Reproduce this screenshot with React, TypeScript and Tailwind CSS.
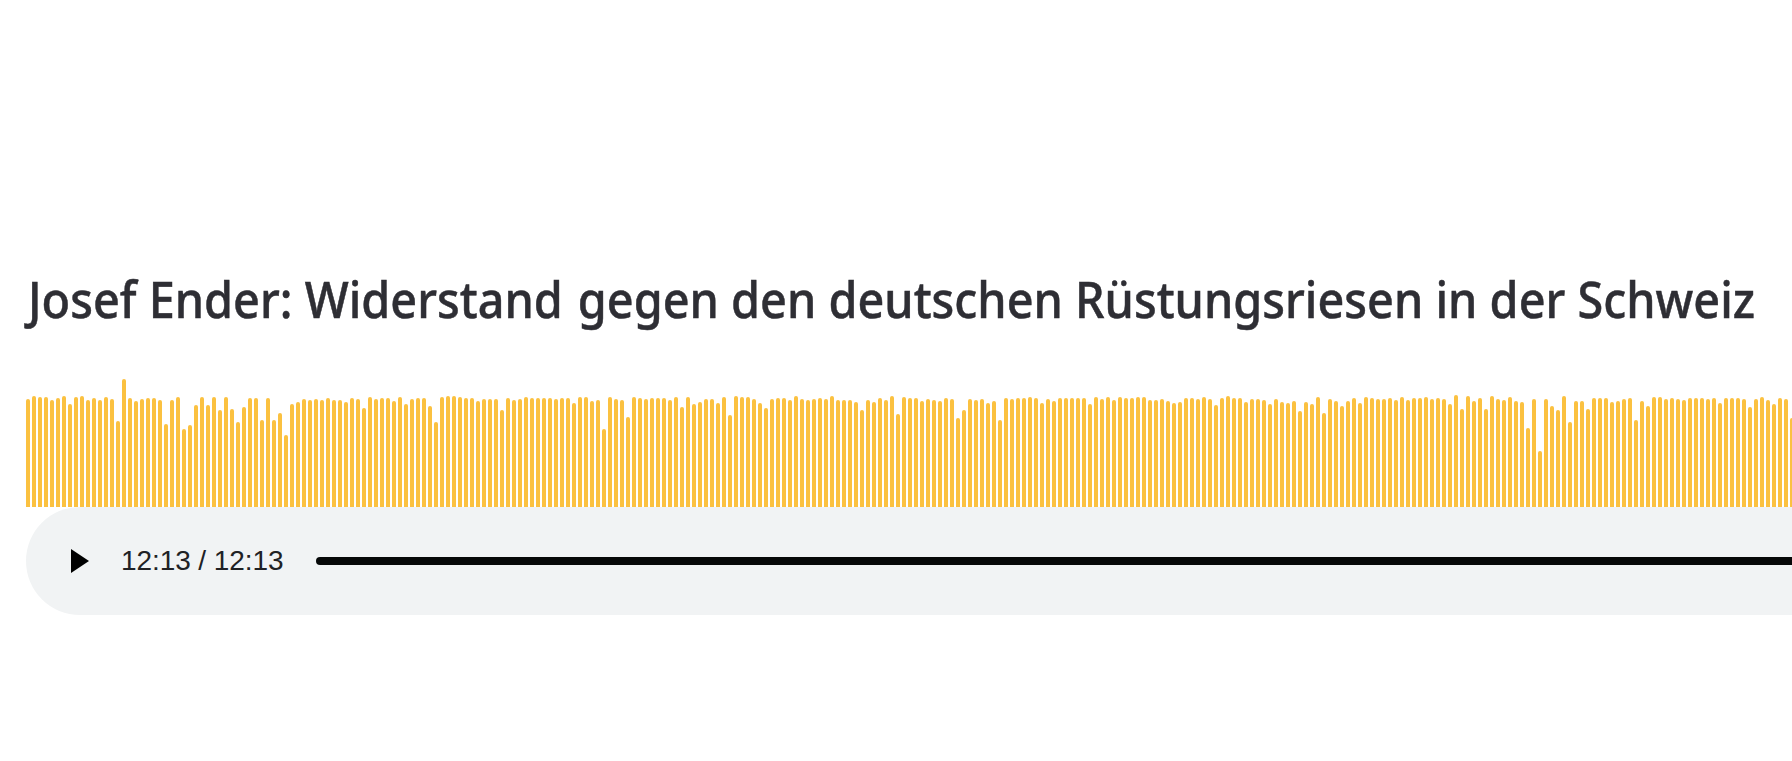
import React from "react";

// Peak heights in px, one entry per bar
const PEAKS = [
  108, 111, 110, 110, 107, 109, 111, 103, 110, 111, 107, 109, 107, 110, 108,
  86, 128, 109, 106, 108, 109, 109, 107, 83, 107, 110, 78, 82, 102, 110,
  102, 110, 97, 110, 98, 85, 100, 109, 109, 87, 109, 87, 94, 72, 103,
  105, 108, 107, 108, 107, 109, 107, 107, 105, 109, 108, 99, 110, 108, 109,
  109, 106, 110, 103, 108, 109, 109, 101, 85, 110, 111, 111, 110, 109, 109,
  106, 108, 108, 108, 97, 109, 107, 108, 110, 109, 109, 109, 109, 108, 109,
  109, 104, 110, 110, 106, 107, 78, 110, 108, 107, 90, 110, 109, 108, 109,
  109, 109, 107, 110, 100, 110, 103, 105, 108, 108, 104, 110, 92, 111, 110,
  110, 108, 104, 99, 108, 109, 109, 107, 111, 108, 107, 108, 109, 108, 111,
  107, 107, 107, 105, 97, 107, 105, 109, 107, 111, 93, 110, 109, 109, 106,
  108, 107, 106, 109, 108, 89, 97, 108, 107, 108, 104, 106, 87, 109, 108,
  109, 109, 110, 109, 104, 108, 106, 109, 109, 109, 109, 109, 103, 110, 108,
  110, 107, 110, 109, 109, 110, 110, 107, 107, 108, 106, 104, 105, 109, 109,
  108, 110, 108, 102, 109, 111, 109, 109, 105, 108, 108, 107, 103, 108, 105,
  104, 106, 96, 105, 103, 110, 94, 108, 106, 101, 106, 109, 104, 110, 109,
  108, 108, 109, 107, 110, 107, 109, 109, 110, 108, 109, 108, 103, 112, 98,
  111, 106, 109, 98, 111, 108, 107, 110, 106, 105, 79, 108, 56, 108, 101,
  97, 111, 85, 106, 106, 98, 109, 109, 109, 105, 106, 108, 109, 87, 106,
  101, 110, 110, 108, 109, 108, 107, 109, 109, 109, 108, 109, 104, 109, 109,
  109, 108, 100, 108, 110, 107, 103, 109, 108, 89,
];

const Waveform = () => (
  <div className="flex h-32 items-end gap-[2px]">
    {PEAKS.map((height, i) => (
      <div
        key={i}
        className="w-1 shrink-0 rounded-t-[2px] bg-[#fbc140]"
        style={{ height }}
      />
    ))}
  </div>
);

const AudioControls = () => (
  <div className="flex h-[108px] w-[1900px] items-center rounded-full bg-[#f1f3f4] pl-[45px]">
    <button type="button" aria-label="Play" className="shrink-0">
      <svg width="18" height="24" viewBox="0 0 18 24" className="block">
        <path d="M0 0L18 12L0 24Z" fill="#000" />
      </svg>
    </button>
    <span className="ml-8 w-[195px] shrink-0 font-['Liberation_Sans',sans-serif] text-[28px] leading-8 tracking-[-0.08px] whitespace-nowrap text-[#202124]">
      12:13 / 12:13
    </span>
    <div className="h-2 grow rounded-full bg-[#060808]" />
  </div>
);

const App = () => {
  return (
    <div className="h-[761px] w-full overflow-hidden bg-white pt-[259px] pl-[26px]">
      <h1 className="ml-[2px] h-[120px] w-max origin-left scale-x-[0.936] font-['Noto_Sans',sans-serif] text-[50px] leading-[80px] font-medium whitespace-nowrap text-[#2e2e34] [-webkit-text-stroke:0.5px_#2e2e34]">
        Josef Ender: Widerstand <span className="ml-[3px]">gegen</span> den
        deutschen Rüstungsriesen in der Schweiz
      </h1>
      <Waveform />
      <AudioControls />
    </div>
  );
};

export default App;
